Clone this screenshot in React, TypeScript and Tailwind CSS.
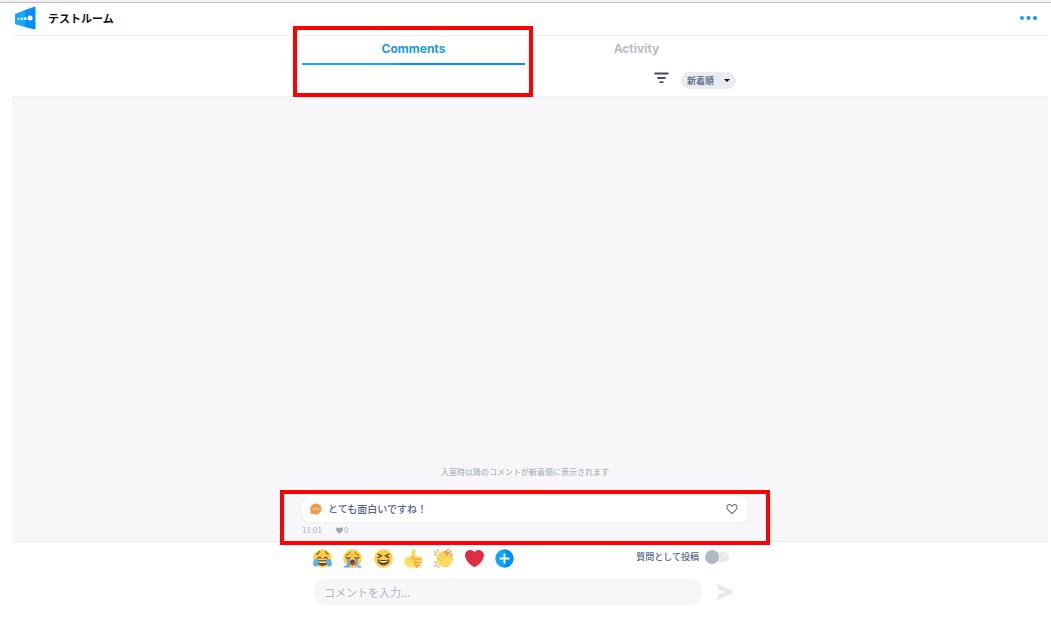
import { useState } from 'react';
import type { ReactNode } from 'react';

const JoyIcon = () => (
  <svg viewBox="0 0 36 36" className="size-[19px]" aria-hidden="true">
    <circle cx="18" cy="18" r="17.5" fill="#FFCC4D" />
    <path fill="#664500" d="M28.5 17.8C28.4 17.7 27 14.5 24 14.5s-4.4 3.2-4.5 3.3c-.3.7.4 1 .8.6 0 0 1.200-.9 3.700-.9s3.700.9 3.700.9c.5.4 1.100 0 .8-.6zM16.500 17.800C16.400 17.700 15 14.500 12 14.500s-4.400 3.200-4.500 3.300c-.3.7.4 1 .8.6 0 0 1.200-.9 3.700-.9s3.700.9 3.700.9c.5.4 1.100 0 .8-.6z" />
    <path fill="none" stroke="#664500" strokeWidth="2" strokeLinecap="round" d="M7 10c2-1 4-3 5-5M29 10c-2-1-4-3-5-5" />
    <path fill="#664500" d="M18 21.500c-3.600 0-6-.4-9-1-.7-.1-2 0-2 2 0 4 4.600 9 11 9s11-5 11-9c0-2-1.300-2.100-2-2-3 .6-5.400 1-9 1z" />
    <path fill="#fff" d="M9 22.500s3 1 9 1 9-1 9-1-.5 4-9 4-9-4-9-4z" />
    <path fill="#5DADEC" d="M7 19c-3 0-7 3-7 9 0 3 2 5 5 5 5 0 6-5 6-9 0-3-1-5-4-5zM29 19c3 0 7 3 7 9 0 3-2 5-5 5-5 0-6-5-6-9 0-3 1-5 4-5z" />
  </svg>
);

const SobIcon = () => (
  <svg viewBox="0 0 36 36" className="size-[19px]" aria-hidden="true">
    <circle cx="18" cy="18" r="17.500" fill="#FFCC4D" />
    <path fill="none" stroke="#664500" strokeWidth="1.600" strokeLinecap="round" d="M6 12c3-1 5-2 7-5M30 12c-3-1-5-2-7-5" />
    <path fill="#5DADEC" d="M8 17h5v17H8zM23 17h5v17h-5zM1 34c1-2 5-3 7-3 3 0 6 2 6 4H1zM35 34c-1-2-5-3-7-3-3 0-6 2-6 4h13z" />
    <path fill="none" stroke="#664500" strokeWidth="2" strokeLinecap="round" d="M6 16c3 2 6 2 8 0M22 16c2 2 5 2 8 0" />
    <ellipse cx="18" cy="25.500" rx="4.500" ry="5.500" fill="#664500" />
    <path fill="#DD2E44" d="M14 27c1-4 7-4 8 0-1 5-7 5-8 0z" />
  </svg>
);

const LaughIcon = () => (
  <svg viewBox="0 0 36 36" className="size-[19px]" aria-hidden="true">
    <circle cx="18" cy="18" r="17.500" fill="#FFCC4D" />
    <path fill="none" stroke="#664500" strokeWidth="2.500" strokeLinecap="round" strokeLinejoin="round" d="M7.500 9.500l7 3.500-7 3.500M28.500 9.500l-7 3.500 7 3.500" />
    <path fill="#664500" d="M18 21c-3.600 0-6-.4-9-1-.7-.1-2 0-2 2 0 4 4.600 9 11 9s11-5 11-9c0-2-1.300-2.100-2-2-3 .6-5.400 1-9 1z" />
    <path fill="#fff" d="M9 22s3 1 9 1 9-1 9-1-2 4-9 4-9-4-9-4z" />
  </svg>
);

const ThumbIcon = () => (
  <svg viewBox="0 0 36 36" className="size-[19px]" aria-hidden="true">
    <path fill="#FFDB5E" d="M3 17c2-2 5-3 8-3 3-4 4-6 4-11 0-4 7-4 7 2 0 4-1 7-2 9h11c3 0 4 4 2 5 2 1 2 5-.5 6 1 2 0 4-2 5 1 3-1 5-3 5H15c-4 0-9-1-12-4-3-4-3-10 0-14z" />
    <path fill="none" stroke="#EE9547" strokeWidth="2" strokeLinecap="round" d="M33 19H22c-3 0-4 5 0 6h11M23 25c-3 1-2 5 0 5.500h8M24 31c-2 1-2 4 1 4M20 14c-2 2-4 3-6 4" />
  </svg>
);

const ClapIcon = () => (
  <svg viewBox="0 0 36 36" className="size-[19px]" aria-hidden="true">
    <path fill="#EF9645" d="M8 12L22 3c3-1 4 1 3 3l4-1c3 0 3 3 1 4 4 1 6 7 5 13l-5 9c-5 4-11 4-15 1z" />
    <path fill="#FFDB5E" d="M6 14c-2 1-2 3 0 4l-1 4c-1 2 0 3 2 3l2 5c1 1 2 2 4 1 4 5 13 4 18-1 4-4 4-10 2-15l-3-6c-2-2-4-1-4 2l1 4L17 4c-2-2-5 0-3 3l-3-2c-3-1-4 2-2 4z" />
    <path fill="none" stroke="#EF9645" strokeWidth="1.200" strokeLinecap="round" d="M10 10l8 8M15 8l8 8M7 18l8 6" />
    <path stroke="#E2864A" strokeWidth="2" strokeLinecap="round" d="M2 5l3 3M7 1l1 3M1 11l3 1M27 1l-1 2M32 3l-3 3M35 9l-3 1M1 26l3-1M2 33l3-3M8 35l1-2" />
  </svg>
);

const HeartIcon = () => (
  <svg viewBox="0 0 36 36" className="size-[19px]" aria-hidden="true">
    <path fill="#DD2E44" d="M35.885 11.833c0-5.450-4.418-9.868-9.867-9.868-3.308 0-6.227 1.633-8.018 4.129-1.791-2.496-4.710-4.129-8.017-4.129-5.450 0-9.868 4.417-9.868 9.868 0 .772.098 1.520.266 2.241C1.751 22.587 11.216 31.568 18 34.034c6.783-2.466 16.249-11.447 17.617-19.959.170-.721.268-1.469.268-2.242z" />
  </svg>
);

const PlusIcon = () => (
  <svg viewBox="0 0 36 36" className="size-[19px]" aria-hidden="true">
    <defs>
      <linearGradient id="plus-fill">
        <stop offset="0.4" stopColor="#10a5fd" />
        <stop offset="0.6" stopColor="#068cff" />
      </linearGradient>
    </defs>
    <circle cx="18" cy="18" r="17.500" fill="url(#plus-fill)" />
    <path stroke="#fff" strokeWidth="3.500" strokeLinecap="round" d="M18 10v16M10 18h16" />
  </svg>
);

const Logo = () => (
  <svg viewBox="0 0 21 24" className="h-6 w-[21px]" aria-hidden="true">
    <path fill="#18a8fc" d="M1 7.500L10 4v17l-9-2.500q-1-.3-1-1V8.500q0-.8 1-1z" />
    <path fill="#078dff" d="M10 4l9.500-3.300q1-.2 1 .8v21.200q0 1-1 .8L10 21z" />
    <g fill="#fff">
      <circle cx="3.500" cy="12.700" r="1" />
      <circle cx="6.800" cy="12.700" r="1.200" />
      <circle cx="10.200" cy="12.400" r="1.500" />
      <circle cx="15" cy="12" r="2.500" />
    </g>
  </svg>
);

const reactions: { label: string; icon: ReactNode }[] = [
  { label: 'joy', icon: <JoyIcon /> },
  { label: 'sob', icon: <SobIcon /> },
  { label: 'laughing', icon: <LaughIcon /> },
  { label: 'thumbs up', icon: <ThumbIcon /> },
  { label: 'clap', icon: <ClapIcon /> },
  { label: 'heart', icon: <HeartIcon /> },
  { label: 'more', icon: <PlusIcon /> },
];

const comments = [{ id: 1, text: 'とても面白いですね！', time: '11:01', likes: 0 }];

const App = () => {
  const [tab, setTab] = useState('comments');
  const [asQuestion, setAsQuestion] = useState(false);

  return (
    <div className="relative flex min-h-screen flex-col bg-white font-['Noto_Sans_CJK_JP',sans-serif] text-[#56648a]">
      <div className="h-[3px] border-b border-[#c3c1c3] bg-[#f1eff0]" />

      <div className="flex flex-1 flex-col pl-3 pr-[3px]">
        <header className="flex h-[33px] items-center border-b border-[#f0f0f1] pr-[11px] pb-[2px] pl-[3px]">
          <Logo />
          <h1 className="ml-3 text-[11px] leading-4 font-bold text-[#101014]">テストルーム</h1>
          <button type="button" aria-label="menu" className="ml-auto cursor-pointer">
            <svg viewBox="0 0 17 4" className="h-1 w-[17px]" aria-hidden="true">
              <circle cx="2" cy="2" r="2" fill="#18a2f8" />
              <circle cx="8.500" cy="2" r="2" fill="#0a90ff" />
              <circle cx="15" cy="2" r="2" fill="#0a90ff" />
            </svg>
          </button>
        </header>

        {/* Tabs and sort order */}
        <div className="border-b border-[#eeeff0] pr-[10px] pb-[7px]">
          <div className="mx-auto max-w-[446px]">
            <nav className="grid grid-cols-2 font-['Inter',sans-serif] text-[12px] leading-4 font-bold">
              <button type="button" onClick={() => setTab('comments')} className="cursor-pointer text-[#1598f6]">
                <span className="block pt-[5px] pb-[6px]">Comments</span>
                <span className={`block h-[2px] ${tab === 'comments' ? 'bg-linear-to-r from-[#18a8fc] from-40% to-[#078dff] to-45%' : ''}`} />
              </button>
              <button type="button" onClick={() => setTab('activity')} className="cursor-pointer text-[#b7bdc2]">
                <span className="block pt-[5px] pb-[6px]">Activity</span>
                <span className={`block h-[2px] ${tab === 'activity' ? 'bg-[#078dff]' : ''}`} />
              </button>
            </nav>
            <div className="flex items-start justify-end gap-3 pt-[7px] pr-3">
              <button type="button" aria-label="filter" className="cursor-pointer">
                <svg viewBox="0 0 15 12" className="h-3 w-[15px]" aria-hidden="true">
                  <path stroke="#3f4c6b" strokeWidth="1.800" strokeLinecap="round" d="M1.200 1.500h12.600M4 6h7M6.300 10.200h2.400" />
                </svg>
              </button>
              <div className="relative">
                <select aria-label="並び順" className="block h-[17px] w-[55px] appearance-none rounded-full bg-[#e9ebee] pl-[6px] text-[9px] leading-4 font-bold text-[#66738f]">
                  <option>新着順</option>
                </select>
                <svg viewBox="0 0 6 3" className="pointer-events-none absolute top-[7px] right-[6px] h-[3px] w-[6px]" aria-hidden="true">
                  <path fill="#101020" d="M0 0h6L3 3z" />
                </svg>
              </div>
            </div>
          </div>
        </div>

        {/* Comment list */}
        <main className="flex flex-1 flex-col justify-end bg-[#f7f7fa] pr-[10px] pb-[3px]">
          <div className="mx-auto w-full max-w-[446px]">
            <p className="mb-4 text-center text-[8px] leading-4 font-medium text-[#b0b6bb]">入室時以降のコメントが新着順に表示されます</p>
            {comments.map((comment) => (
              <article key={comment.id}>
                <div className="flex h-[26px] items-center rounded-lg bg-white px-2 shadow-[0_0_2px_rgba(0,0,0,0.1)]">
                  <svg viewBox="0 0 12 12" className="h-3 w-3" aria-hidden="true">
                    <path fill="#f0984c" d="M6 .5a5.500 5.500 0 1 1-2.500 10.400H.8c-.6 0-.6-.5-.3-.8l.7-1A5.500 5.500 0 0 1 6 .5z" />
                    <g fill="#fff">
                      <circle cx="3.500" cy="6" r=".7" />
                      <circle cx="6" cy="6" r=".7" />
                      <circle cx="8.500" cy="6" r=".7" />
                    </g>
                  </svg>
                  <p className="ml-[6px] text-[10px] leading-4 font-medium">{comment.text}</p>
                  <button type="button" aria-label="like" className="ml-auto cursor-pointer">
                    <svg viewBox="0 0 24 24" className="mr-[2px] size-3" fill="none" stroke="#6e7a94" strokeWidth="2.400" aria-hidden="true">
                      <path d="M12 21C8 18 2 13.500 2 8.500 2 2.500 9 1.500 12 6.500c3-5 10-4 10 2 0 5-6 9.500-10 12.500z" />
                    </svg>
                  </button>
                </div>
                <div className="flex items-center text-[8px] leading-4 text-[#aeb4ba]">
                  <time>{comment.time}</time>
                  <svg viewBox="0 0 24 24" className="mr-px ml-[14px] size-[7px]" fill="#a0a8af" aria-hidden="true">
                    <path d="M12 23C7 19 0 14 0 8 0 1 9 0 12 5c3-5 12-4 12 3 0 6-7 11-12 15z" />
                  </svg>
                  <span>{comment.likes}</span>
                </div>
              </article>
            ))}
          </div>
        </main>

        {/* Reactions and input */}
        <footer className="border-t border-[#eaebec] pt-[7px] pr-[10px] pb-[29px]">
          <form className="mx-auto max-w-[446px] pr-[13px] pl-[11px]" onSubmit={(e) => e.preventDefault()}>
            <div className="flex items-start justify-between pr-[6px]">
              <div className="flex w-[201px] justify-between">
                {reactions.map((reaction) => (
                  <button key={reaction.label} type="button" aria-label={reaction.label} className="cursor-pointer">
                    {reaction.icon}
                  </button>
                ))}
              </div>
              <label className="flex items-center gap-[6px] text-[9px] leading-4 font-medium">
                質問として投稿
                <input
                  type="checkbox"
                  checked={asQuestion}
                  onChange={(e) => setAsQuestion(e.target.checked)}
                  className="peer sr-only"
                />
                <span className="flex h-[10px] w-6 items-center rounded-full bg-[#e9ebee] peer-checked:justify-end">
                  <span className="size-[14px] rounded-full bg-[#b1b8bf]" />
                </span>
              </label>
            </div>
            <div className="mt-[11px] flex items-center gap-[14px]">
              <input
                type="text"
                aria-label="コメント"
                placeholder="コメントを入力..."
                className="h-[26px] min-w-0 flex-1 rounded-full bg-[#f7f7fa] px-[11px] text-[11px] leading-4 outline-none placeholder:text-[#b0b6bb]"
              />
              <button type="submit" aria-label="送信" className="cursor-pointer">
                <svg viewBox="0 0 18 18" className="size-[18px]" aria-hidden="true">
                  <path fill="#e6e8ea" d="M.5.800L17.500 9 .5 17.200l1.300-6.700L10 9 1.800 7.500z" />
                </svg>
              </button>
            </div>
          </form>
        </footer>
      </div>

      {/* Highlight frames */}
      <div className="pointer-events-none absolute top-[26px] left-1/2 -ml-[233px] h-[71px] w-60 border-4 border-[#ff0000]" />
      <div className="pointer-events-none absolute bottom-[89px] left-1/2 -ml-[246px] h-[55px] w-[490px] border-4 border-[#ff0000]" />
    </div>
  );
};

export default App;
